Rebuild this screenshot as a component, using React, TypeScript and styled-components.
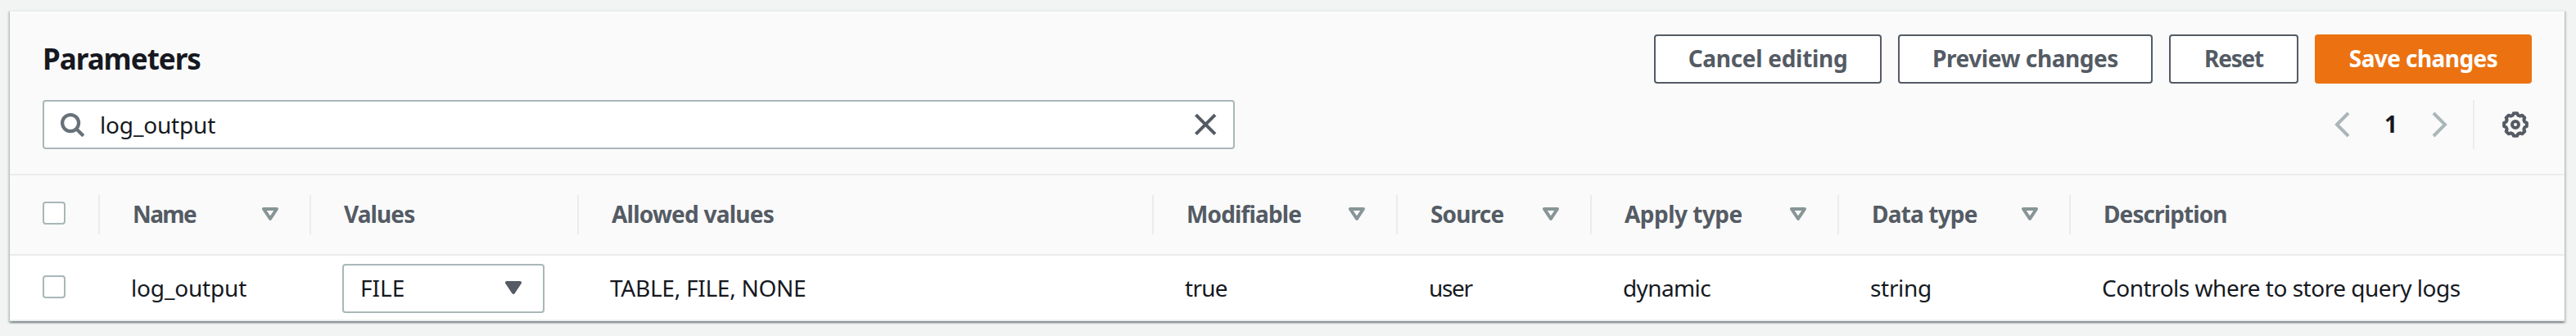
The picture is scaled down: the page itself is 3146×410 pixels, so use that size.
import React from "react";
import styled, { createGlobalStyle } from "styled-components";

const color = {
  page: "#f2f3f3",
  header: "#fafafa",
  line: "#eaeced",
  text: "#16191f",
  muted: "#545b64",
  control: "#aab7b8",
  sort: "#879596",
  accent: "#ec7211",
};

const GlobalStyle = createGlobalStyle`
  *, *::before, *::after { box-sizing: border-box; }
  body {
    margin: 0;
    background: ${color.page};
    color: ${color.text};
    font: 400 28px/40px "Noto Sans", "Open Sans", sans-serif;
  }
  svg { display: block; flex: none; }
`;

const Page = styled.main`
  height: 410px;
  padding: 12px 14px 0 12px;
`;

const Panel = styled.section`
  height: 380px;
  background: #fff;
  border-top: 2px solid ${color.line};
  box-shadow: 0 2px 2px 0 rgba(0, 28, 36, 0.3), 2px 2px 2px 0 rgba(0, 28, 36, 0.15),
    -2px 2px 2px 0 rgba(0, 28, 36, 0.15);
`;

const PanelHeader = styled.header`
  display: flex;
  flex-direction: column;
  gap: 20px;
  height: 200px;
  padding: 28px 40px 0;
  background: ${color.header};
  border-bottom: 2px solid ${color.line};
`;

const HeaderRow = styled.div`
  display: flex;
  align-items: center;
  justify-content: space-between;
  height: 60px;
`;

const Title = styled.h2`
  margin: 0;
  font-size: 35px;
  font-weight: 700;
  letter-spacing: -1px;
`;

const Actions = styled.div`
  display: flex;
  gap: 20px;
`;

const Button = styled.button<{ $width: number; $tracking: number; $primary?: boolean }>`
  width: ${(p) => p.$width}px;
  height: 60px;
  padding: 0 0 2px;
  border: 2px solid ${(p) => (p.$primary ? color.accent : color.muted)};
  border-radius: 4px;
  background: ${(p) => (p.$primary ? color.accent : "#fff")};
  color: ${(p) => (p.$primary ? "#fff" : color.muted)};
  font: inherit;
  font-weight: 700;
  letter-spacing: ${(p) => p.$tracking}px;
  white-space: nowrap;
`;

const SearchBox = styled.div`
  display: flex;
  align-items: center;
  width: 1456px;
  height: 60px;
  padding: 0 18px;
  border: 2px solid ${color.control};
  border-radius: 4px;
  background: #fff;
`;

const SearchText = styled.span`
  flex: 1;
  padding-left: 18px;
  letter-spacing: -0.16px;
`;

const Pager = styled.nav`
  display: flex;
  align-items: center;
  height: 60px;
`;

const PageNumber = styled.span`
  width: 88px;
  padding-bottom: 2px;
  text-align: center;
  font-weight: 700;
`;

const Preferences = styled.div`
  display: flex;
  align-items: center;
  height: 60px;
  margin-left: 24px;
  padding: 0 4px 0 34px;
  border-left: 2px solid ${color.line};
`;

const Row = styled.div<{ $head?: boolean }>`
  display: grid;
  grid-template-columns: 108px 258px 327px 702px 298px 237px 302px 283px 1fr;
  align-items: center;
  height: ${(p) => (p.$head ? 98 : 80)}px;
  background: ${(p) => (p.$head ? color.header : "#fff")};
  border-bottom: 2px solid ${color.line};
`;

const CheckCell = styled.div<{ $lift: number }>`
  padding: 0 0 ${(p) => p.$lift}px 40px;
`;

const Checkbox = styled.div`
  width: 28px;
  height: 28px;
  border: 2px solid ${color.control};
  border-radius: 4px;
  background: #fff;
`;

const HeadCell = styled.div<{ $tracking: number }>`
  display: flex;
  align-items: center;
  justify-content: space-between;
  height: 48px;
  padding: 0 38px 2px 40px;
  border-left: 2px solid ${color.line};
  color: ${color.muted};
  font-weight: 700;
  letter-spacing: ${(p) => p.$tracking}px;
  white-space: nowrap;
`;

const Cell = styled.div<{ $tracking?: number }>`
  padding-left: 40px;
  letter-spacing: ${(p) => p.$tracking ?? 0}px;
  white-space: nowrap;
`;

const Select = styled.div`
  display: flex;
  align-items: center;
  justify-content: space-between;
  width: 247px;
  height: 60px;
  margin-top: 2px;
  padding: 0 26px 2px 20px;
  border: 2px solid ${color.control};
  border-radius: 4px;
  background: #fff;
`;

const SearchIcon = () => (
  <svg width="32" height="32" viewBox="0 0 32 32" fill="none" stroke="#687078" strokeWidth="4.2">
    <circle cx="14.1" cy="14.1" r="10" />
    <path d="M21.2 21.2 29.8 29.8" />
  </svg>
);

const ClearIcon = () => (
  <svg width="32" height="32" viewBox="0 0 32 32" stroke={color.muted} strokeWidth="4">
    <path d="M4.5 4.2 28 27.7M28 4.2 4.5 27.7" />
  </svg>
);

const Chevron = ({ d }: { d: string }) => (
  <svg width="32" height="32" viewBox="0 0 32 32" fill="none" stroke={color.control} strokeWidth="4">
    <path d={d} />
  </svg>
);

const point = (deg: number, r: number) => {
  const a = (deg * Math.PI) / 180;
  return `${(16 + r * Math.sin(a)).toFixed(2)} ${(16 - r * Math.cos(a)).toFixed(2)}`;
};

const gearOutline =
  "M" +
  Array.from({ length: 8 }, (_, i) => i * 45)
    .flatMap((a) => [point(a - 9, 14), point(a + 9, 14), point(a + 16, 11.8), point(a + 29, 11.8)])
    .join("L") +
  "Z";

const GearIcon = () => (
  <svg width="32" height="32" viewBox="0 0 32 32" fill="none" stroke={color.muted} strokeWidth="4">
    <path d={gearOutline} strokeLinejoin="round" />
    <circle cx="16" cy="16" r="4" />
  </svg>
);

const Triangle = ({ filled }: { filled?: boolean }) => (
  <svg
    width="20"
    height="16"
    viewBox="0 0 20 16"
    fill={filled ? color.muted : "#fff"}
    stroke={filled ? color.muted : color.sort}
    strokeWidth="4"
    strokeLinejoin="round"
  >
    <path d="M2 2H18L10 13.9Z" />
  </svg>
);

const columns = [
  { label: "Name", tracking: -1.6, sortable: true },
  { label: "Values", tracking: -0.9 },
  { label: "Allowed values", tracking: -0.77 },
  { label: "Modifiable", tracking: -0.85, sortable: true },
  { label: "Source", tracking: -0.82, sortable: true },
  { label: "Apply type", tracking: -0.52, sortable: true },
  { label: "Data type", tracking: -0.82, sortable: true },
  { label: "Description", tracking: -0.9 },
];

export default function App() {
  return (
    <Page>
      <GlobalStyle />
      <Panel>
        <PanelHeader>
          <HeaderRow>
            <Title>Parameters</Title>
            <Actions>
              <Button $width={278} $tracking={-0.3}>Cancel editing</Button>
              <Button $width={311} $tracking={-0.43}>Preview changes</Button>
              <Button $width={158} $tracking={-1.2}>Reset</Button>
              <Button $width={265} $tracking={-0.58} $primary>Save changes</Button>
            </Actions>
          </HeaderRow>
          <HeaderRow>
            <SearchBox>
              <SearchIcon />
              <SearchText>log_output</SearchText>
              <ClearIcon />
            </SearchBox>
            <Pager>
              <Chevron d="M24 2 10 16 24 30" />
              <PageNumber>1</PageNumber>
              <Chevron d="M8 2 22 16 8 30" />
              <Preferences>
                <GearIcon />
              </Preferences>
            </Pager>
          </HeaderRow>
        </PanelHeader>
        <Row $head>
          <CheckCell $lift={4}>
            <Checkbox />
          </CheckCell>
          {columns.map((c) => (
            <HeadCell key={c.label} $tracking={c.tracking}>
              {c.label}
              {c.sortable && <Triangle />}
            </HeadCell>
          ))}
        </Row>
        <Row>
          <CheckCell $lift={2}>
            <Checkbox />
          </CheckCell>
          <Cell $tracking={-0.16}>log_output</Cell>
          <Cell>
            <Select>
              FILE
              <Triangle filled />
            </Select>
          </Cell>
          <Cell $tracking={-0.26}>TABLE, FILE, NONE</Cell>
          <Cell $tracking={-0.73}>true</Cell>
          <Cell $tracking={-1.3}>user</Cell>
          <Cell $tracking={-0.62}>dynamic</Cell>
          <Cell $tracking={-0.32}>string</Cell>
          <Cell $tracking={-0.485}>Controls where to store query logs</Cell>
        </Row>
      </Panel>
    </Page>
  );
}
